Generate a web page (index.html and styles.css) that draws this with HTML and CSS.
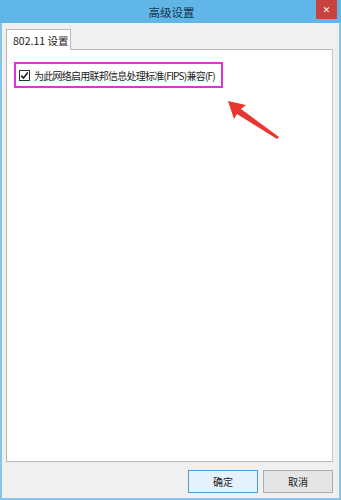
FILE: index.html
```html
<!DOCTYPE html>
<html>
<head>
<meta charset="utf-8">
<link rel="stylesheet" href="styles.css">
</head>
<body>
<div class="window">
  <div class="titlebar">
    <span class="title">高级设置</span>
    <span class="close">✕</span>
  </div>
  <div class="client">
    <div class="tabs">
      <div class="tab">802.11 设置</div>
    </div>
    <div class="panel">
      <div class="highlight">
        <span class="checkbox">
          <svg width="9" height="9" viewBox="0 0 9 9"><path d="M1.2 4.6 L3.5 7 L7.8 1.6" fill="none" stroke="#222" stroke-width="1.6"/></svg>
        </span>
        <span class="label">为此网络启用联邦信息处理标准(FIPS)兼容(F)</span>
      </div>
      <svg class="arrow" width="60" height="45" viewBox="0 0 60 45">
        <path d="M2 2 L20 6 L15 10 L53 38 L51 40 L11 15 L8 20 Z" fill="#e8372f"/>
      </svg>
    </div>
    <div class="buttons">
      <button class="btn default">确定</button>
      <button class="btn">取消</button>
    </div>
  </div>
</div>
</body>
</html>
```
FILE: styles.css
```css
html, body {
  margin: 0;
  padding: 0;
}
body {
  font-family: "Noto Sans CJK SC", "Liberation Sans", sans-serif;
  font-size: 10px;
  color: #1a1a1a;
}
.window {
  position: relative;
  width: 341px;
  height: 500px;
  display: flex;
  flex-direction: column;
  background: #f0f0f0;
  overflow: hidden;
}
.titlebar {
  position: relative;
  height: 23px;
  background: #5fb6e7;
  display: flex;
  align-items: center;
  justify-content: center;
  flex: none;
}
.title {
  font-size: 11.5px;
  color: #17354d;
  margin-left: 2px;
}
.close {
  position: absolute;
  right: 4px;
  top: 0;
  width: 21px;
  height: 19px;
  background: #c9423e;
  color: #fff;
  font-family: "DejaVu Sans", sans-serif;
  font-weight: bold;
  font-size: 9px;
  display: flex;
  align-items: center;
  justify-content: center;
}
.client {
  flex: 1;
  display: flex;
  flex-direction: column;
  border: 2px solid #86c4e8;
  border-top: 0;
  padding: 6px 6px 0 4px;
  min-height: 0;
}
.tabs {
  display: flex;
  height: 20px;
}
.tab {
  width: 65px;
  box-sizing: border-box;
  background: #fff;
  border: 1px solid #b9b9b9;
  border-bottom: 0;
  padding-left: 6px;
  display: flex;
  align-items: center;
  font-size: 10.5px;
  position: relative;
  z-index: 1;
  margin-bottom: -1px;
}
.panel {
  position: relative;
  height: 413px;
  box-sizing: border-box;
  background: #fff;
  border: 1px solid #b9b9b9;
  border-right-color: #c8c8c8;
  padding: 12px 0 0 7px;
}
.highlight {
  display: inline-flex;
  align-items: center;
  border: 2px solid #e030e0;
  height: 26px;
  box-sizing: border-box;
  width: 209px;
  padding-left: 3px;
}
.checkbox {
  width: 9px;
  height: 9px;
  border: 1px solid #333;
  background: #fff;
  display: flex;
  align-items: center;
  justify-content: center;
  margin-right: 4px;
}
.label {
  font-size: 10px;
  white-space: nowrap;
  letter-spacing: -0.75px;
}
.arrow {
  position: absolute;
  left: 219px;
  top: 49px;
}
.buttons {
  display: flex;
  justify-content: flex-end;
  gap: 5px;
  margin-top: 8px;
}
.btn {
  width: 70px;
  height: 23px;
  box-sizing: border-box;
  border: 1px solid #adadad;
  background: #e5e5e5;
  font-family: inherit;
  font-size: 10px;
  color: #1a1a1a;
  padding: 0;
}
.btn.default {
  border-color: #4d9ad6;
  background: #e5f1fb;
}
```
